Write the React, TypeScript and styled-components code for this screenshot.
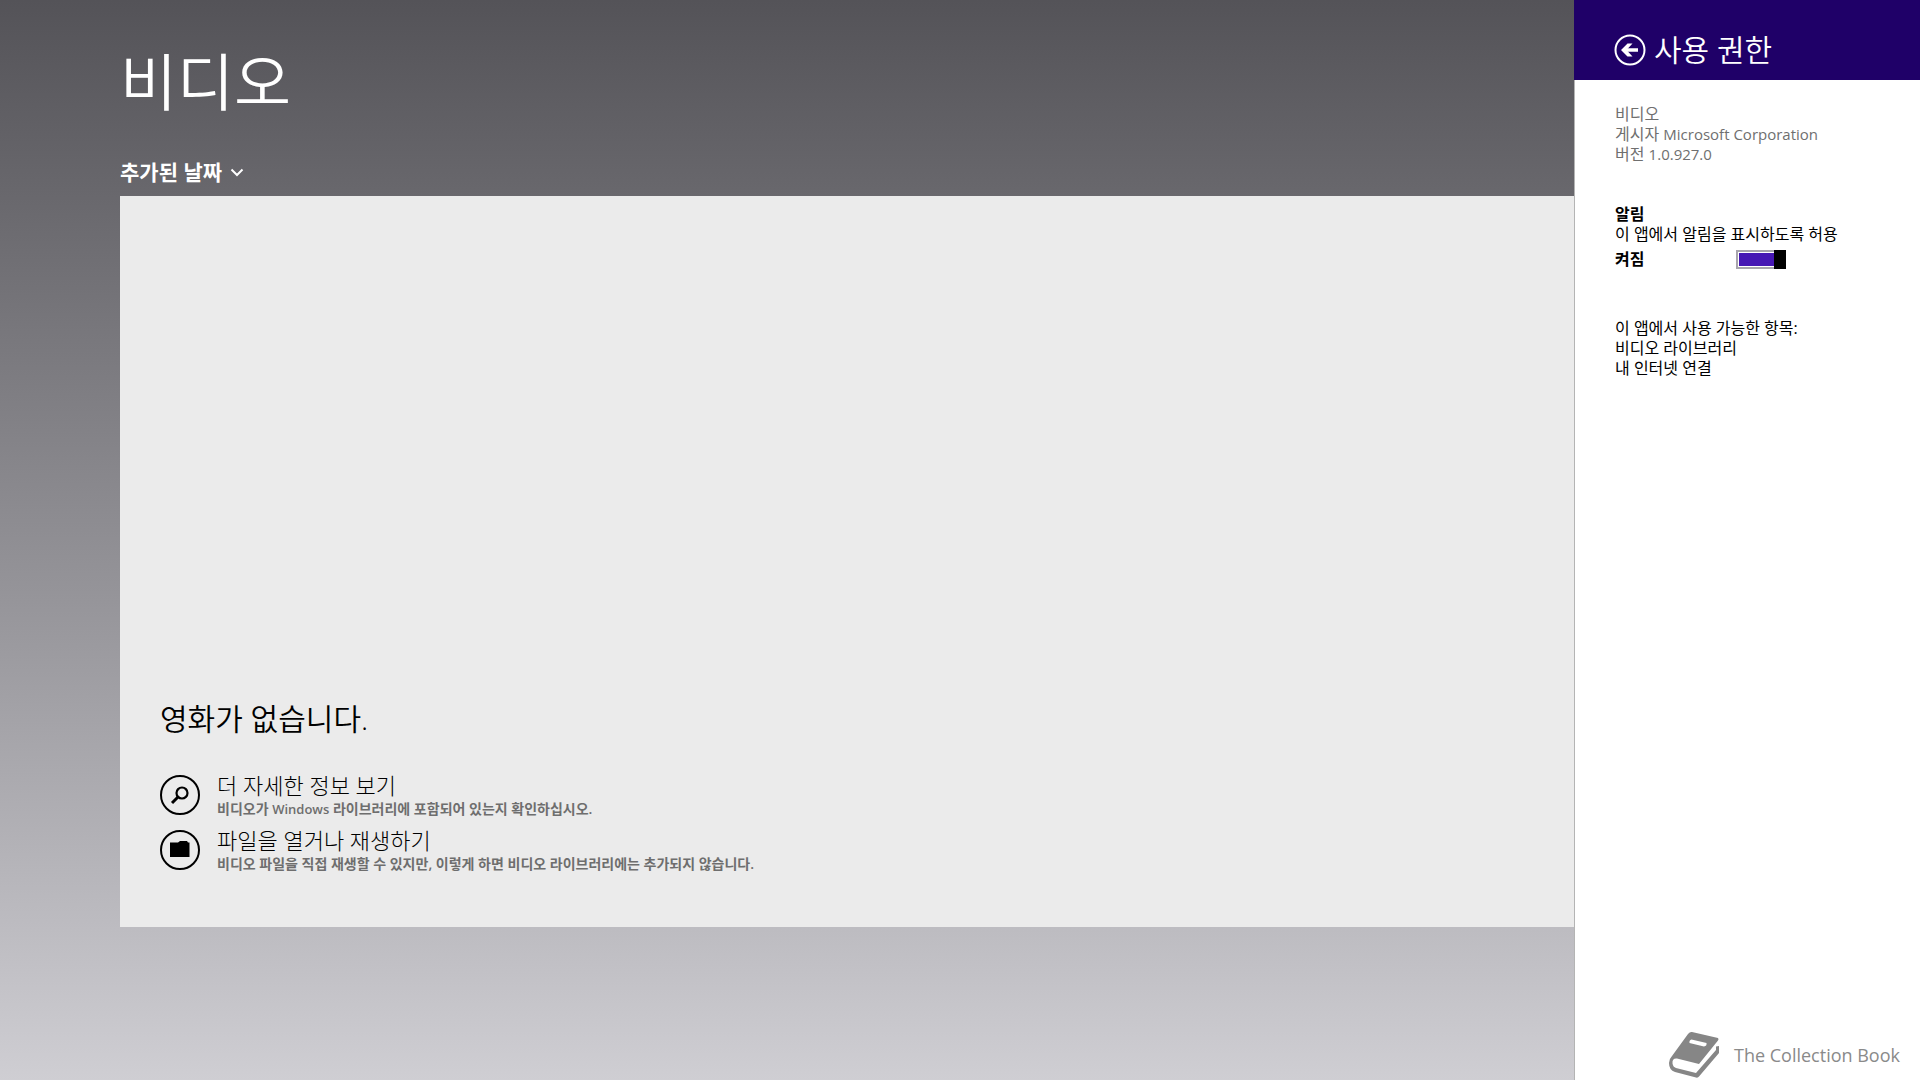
import React, { useState } from "react";
import styled, { createGlobalStyle } from "styled-components";

const Global = createGlobalStyle`
  * { box-sizing: border-box; }
  html, body, #root { height: 100%; }
  body { margin: 0; }
  body, button, input { font-family: "Open Sans", "Noto Sans CJK KR", sans-serif; }
  h1, h2, h3, p, ul { margin: 0; padding: 0; font-weight: 400; }
  ul { list-style: none; }
`;

const Screen = styled.div`
  display: flex;
  min-height: 100vh;
  background: linear-gradient(#545358 0%, #656469 15%, #9a999e 59%, #cfced3 100%);
`;

const Main = styled.main`
  flex: 1;
  min-width: 0;
  display: flex;
  flex-direction: column;
  padding: 40px 0 153px 120px;
`;

const Title = styled.h1`
  font-size: 62px;
  font-weight: 350;
  line-height: 84px;
  color: #fff;
`;

const SortButton = styled.button`
  display: flex;
  align-items: center;
  align-self: flex-start;
  gap: 8px;
  margin-top: 34px;
  padding: 0;
  border: 0;
  background: none;
  color: #fff;
  font-size: 21px;
  font-weight: 700;
  line-height: 28px;
`;

const Panel = styled.section`
  flex: 1;
  display: flex;
  flex-direction: column;
  justify-content: flex-end;
  margin-top: 10px;
  padding: 0 40px 50px;
  background: #ebebeb;
`;

const EmptyTitle = styled.h2`
  margin-bottom: 26px;
  font-size: 30px;
  font-weight: 350;
  line-height: 44px;
  color: #000;
`;

const Action = styled.button`
  display: flex;
  align-items: center;
  gap: 17px;
  height: 55px;
  padding: 0;
  border: 0;
  background: none;
  text-align: left;
`;

const ActionIcon = styled.svg`
  flex: none;
  width: 40px;
  height: 40px;
`;

const ActionTitle = styled.span`
  display: block;
  font-size: 22px;
  font-weight: 300;
  line-height: 28px;
  color: #000;
`;

const ActionHint = styled.span`
  display: block;
  font-size: 14px;
  font-weight: 600;
  line-height: 20px;
  color: #6e6e6e;
`;

const HintLatin = styled.span`
  font-size: 13px;
`;

const Side = styled.aside`
  flex: none;
  width: 346px;
  display: flex;
  flex-direction: column;
  background: #fff;
`;

const SideHeader = styled.header`
  display: flex;
  align-items: center;
  gap: 8px;
  height: 80px;
  padding: 20px 40px 0;
  background: #1f0068;
  color: #fff;
`;

const BackButton = styled.button`
  display: flex;
  padding: 0;
  border: 0;
  background: none;
`;

const SideTitle = styled.h2`
  font-size: 30px;
  font-weight: 350;
  line-height: 40px;
`;

const SideBody = styled.div`
  flex: 1;
  padding: 24px 40px 0;
  border-left: 1px solid #b4b4b4;
  font-size: 16px;
  line-height: 20px;
  font-weight: 350;
  color: #000;
`;

const AppInfo = styled.div`
  color: #6f6f6f;
`;

const Latin = styled.span`
  font-size: 15px;
`;

const Block = styled.section`
  margin-top: 40px;
`;

const BlockTitle = styled.h3`
  font-size: 16px;
  font-weight: 700;
`;

const ToggleRow = styled.label`
  display: flex;
  align-items: center;
  margin-top: 4px;
  height: 22px;
  font-weight: 700;
`;

const ToggleText = styled.span`
  width: 121px;
`;

const Toggle = styled.input`
  appearance: none;
  display: flex;
  justify-content: flex-start;
  width: 50px;
  height: 19px;
  margin: 0;
  padding: 0;
  border: 2px solid #a8a5ad;
  background: #a6a6a6;
  box-shadow: inset 0 0 0 1px #fff;

  &::before {
    content: "";
    width: 12px;
    margin: -2px;
    background: #000;
  }

  &:checked {
    justify-content: flex-end;
    background: #4617b4;
  }
`;

const Library = styled(Block)`
  margin-top: 48px;
`;

const Brand = styled.footer`
  display: flex;
  align-items: center;
  gap: 14px;
  height: 52px;
  padding: 2px 20px 0 93px;
  border-left: 1px solid #b4b4b4;
  font-size: 18px;
  color: #8a8a8a;
  white-space: nowrap;
`;

export default function App() {
  const [on, setOn] = useState(true);
  return (
    <>
      <Global />
      <Screen>
        <Main>
          <Title>비디오</Title>
          <SortButton type="button">
            추가된 날짜
            <svg width="14" height="10" viewBox="0 0 14 10" fill="none" stroke="#fff" strokeWidth="2">
              <path d="M1.5 2.5 7 8l5.5-5.5" />
            </svg>
          </SortButton>
          <Panel>
            <EmptyTitle>영화가 없습니다.</EmptyTitle>
            <Action type="button">
              <ActionIcon viewBox="0 0 40 40" fill="none" stroke="#000">
                <circle cx="20" cy="20" r="19" strokeWidth="2" />
                <circle cx="22" cy="18" r="5.5" strokeWidth="2.2" />
                <path d="M18 22l-6 6" strokeWidth="3" />
              </ActionIcon>
              <span>
                <ActionTitle>더 자세한 정보 보기</ActionTitle>
                <ActionHint>
                  비디오가 <HintLatin>Windows</HintLatin> 라이브러리에 포함되어 있는지 확인하십시오.
                </ActionHint>
              </span>
            </Action>
            <Action type="button">
              <ActionIcon viewBox="0 0 40 40">
                <circle cx="20" cy="20" r="19" strokeWidth="2" stroke="#000" fill="none" />
                <path d="M10 12.5h8l2-1.500h7l1 1.500h1.500V27H10z" />
              </ActionIcon>
              <span>
                <ActionTitle>파일을 열거나 재생하기</ActionTitle>
                <ActionHint>비디오 파일을 직접 재생할 수 있지만, 이렇게 하면 비디오 라이브러리에는 추가되지 않습니다.</ActionHint>
              </span>
            </Action>
          </Panel>
        </Main>
        <Side>
          <SideHeader>
            <BackButton type="button" aria-label="뒤로">
              <svg width="32" height="32" viewBox="0 0 32 32" fill="none" stroke="#fff">
                <circle cx="16" cy="16" r="14.5" strokeWidth="2" />
                <path d="M24 16H10" strokeWidth="3.5" />
                <path d="M7 16 13.500 9.500h5L12.500 16l6 6.500h-5z" fill="#fff" stroke="none" />
              </svg>
            </BackButton>
            <SideTitle>사용 권한</SideTitle>
          </SideHeader>
          <SideBody>
            <AppInfo>
              <p>비디오</p>
              <p>게시자 <Latin>Microsoft Corporation</Latin></p>
              <p>버전 <Latin>1.0.927.0</Latin></p>
            </AppInfo>
            <Block>
              <BlockTitle>알림</BlockTitle>
              <p>이 앱에서 알림을 표시하도록 허용</p>
              <ToggleRow>
                <ToggleText>{on ? "켜짐" : "꺼짐"}</ToggleText>
                <Toggle type="checkbox" role="switch" checked={on} onChange={(e) => setOn(e.target.checked)} />
              </ToggleRow>
            </Block>
            <Library>
              <p>이 앱에서 사용 가능한 항목:</p>
              <ul>
                <li>비디오 라이브러리</li>
                <li>내 인터넷 연결</li>
              </ul>
            </Library>
          </SideBody>
          <Brand>
            <svg width="52" height="48" viewBox="0 0 52 48" fill="#868686">
              <path
                fillRule="evenodd"
                d="M24 1 50 7Q51 8 50 9.500L31 33 9 27.500Q4 27 4.500 32.500 5 36 8 37L28 42 48 19V15.500L51 15V22L31 45.500Q30 47 28 46.500L7 41Q1 39 1 32 1 28 4 25L20 3Q22 .5 24 1ZM23.500 8.500Q21 9 21.500 12L36 15.500Q39 15 38.500 12Z"
              />
            </svg>
            The Collection Book
          </Brand>
        </Side>
      </Screen>
    </>
  );
}
